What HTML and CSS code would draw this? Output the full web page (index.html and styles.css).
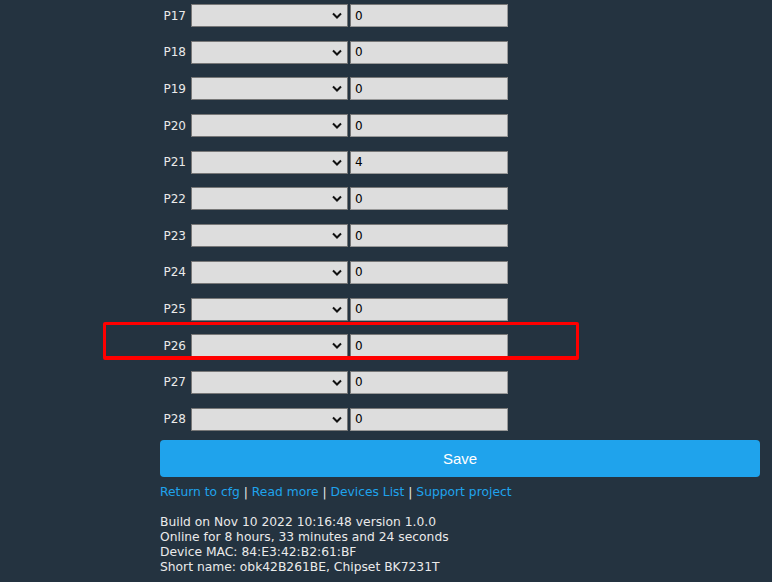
FILE: index.html
```html
<!DOCTYPE html>
<html lang="en">
<head>
  <meta charset="UTF-8">
  <meta name="viewport" content="width=device-width, initial-scale=1.0">
  <title>Pins config</title>
  <link rel="stylesheet" href="styles.css">
</head>
<body>
  <div class="container">
    <form>
      <div class="pins">
        <div class="pin"><label>P17</label><select><option></option></select><input type="text" value="0"></div>
        <div class="pin"><label>P18</label><select><option></option></select><input type="text" value="0"></div>
        <div class="pin"><label>P19</label><select><option></option></select><input type="text" value="0"></div>
        <div class="pin"><label>P20</label><select><option></option></select><input type="text" value="0"></div>
        <div class="pin"><label>P21</label><select><option></option></select><input type="text" value="4"></div>
        <div class="pin"><label>P22</label><select><option></option></select><input type="text" value="0"></div>
        <div class="pin"><label>P23</label><select><option></option></select><input type="text" value="0"></div>
        <div class="pin"><label>P24</label><select><option></option></select><input type="text" value="0"></div>
        <div class="pin"><label>P25</label><select><option></option></select><input type="text" value="0"></div>
        <div class="pin highlight"><label>P26</label><select><option></option></select><input type="text" value="0"></div>
        <div class="pin"><label>P27</label><select><option></option></select><input type="text" value="0"></div>
        <div class="pin"><label>P28</label><select><option></option></select><input type="text" value="0"></div>
      </div>
      <button type="button" class="save">Save</button>
    </form>
    <div class="links">
      <a href="#">Return to cfg</a> | <a href="#">Read more</a> | <a href="#">Devices List</a> | <a href="#">Support project</a>
    </div>
    <div class="info">
      Build on Nov 10 2022 10:16:48 version 1.0.0<br>
      Online for 8 hours, 33 minutes and 24 seconds<br>
      Device MAC: 84:E3:42:B2:61:BF<br>
      Short name: obk42B261BE, Chipset BK7231T
    </div>
  </div>
</body>
</html>
```

FILE: styles.css
```css
body { margin: 0; background: #243340; color: #eaeaea; font-family: "DejaVu Sans", Verdana, sans-serif; font-size: 12.3px; }
.container { width: 600px; margin-left: 160px; padding-top: 4px; }
.pins { display: flex; flex-direction: column; gap: 13.7px; }
.pin { position: relative; display: flex; align-items: center; height: 23px; }
.pin label { width: 26px; text-align: right; margin-right: 5px; font-size: 12px; color: #eaeaea; }
.pin select { width: 157px; height: 23px; margin-right: 2px; background: #dddddd; border: 1px solid #777; border-radius: 0; appearance: none; padding: 0;
  background-image: url("data:image/svg+xml,%3Csvg xmlns='http://www.w3.org/2000/svg' width='10' height='7'%3E%3Cpath d='M1 1.5l4 4 4-4' fill='none' stroke='%23111' stroke-width='2'/%3E%3C/svg%3E");
  background-repeat: no-repeat; background-position: right 5px center; }
.pin input { width: 158px; height: 23px; box-sizing: border-box; background: #dddddd; border: 1px solid #777; border-right-color: #999; border-bottom-color: #999; padding: 0 4px; font-family: "DejaVu Sans", Verdana, sans-serif; font-size: 12px; color: #000; }
.highlight::after { content: ""; position: absolute; left: -57px; top: -12px; width: 470px; height: 31px; border: 3px solid #ff0000; border-bottom-width: 4px; border-radius: 2px; }
.save { display: block; width: 100%; margin-top: 9px; height: 37px; background: #1fa3ec; color: #fff; border: none; border-radius: 4px; font-family: "Liberation Sans", Arial, sans-serif; font-size: 15px; cursor: pointer; }
.links { margin-top: 8px; line-height: 15px; color: #eaeaea; }
.links a { color: #1fa3ec; text-decoration: none; }
.info { margin-top: 15px; line-height: 15px; color: #eaeaea; }
```
